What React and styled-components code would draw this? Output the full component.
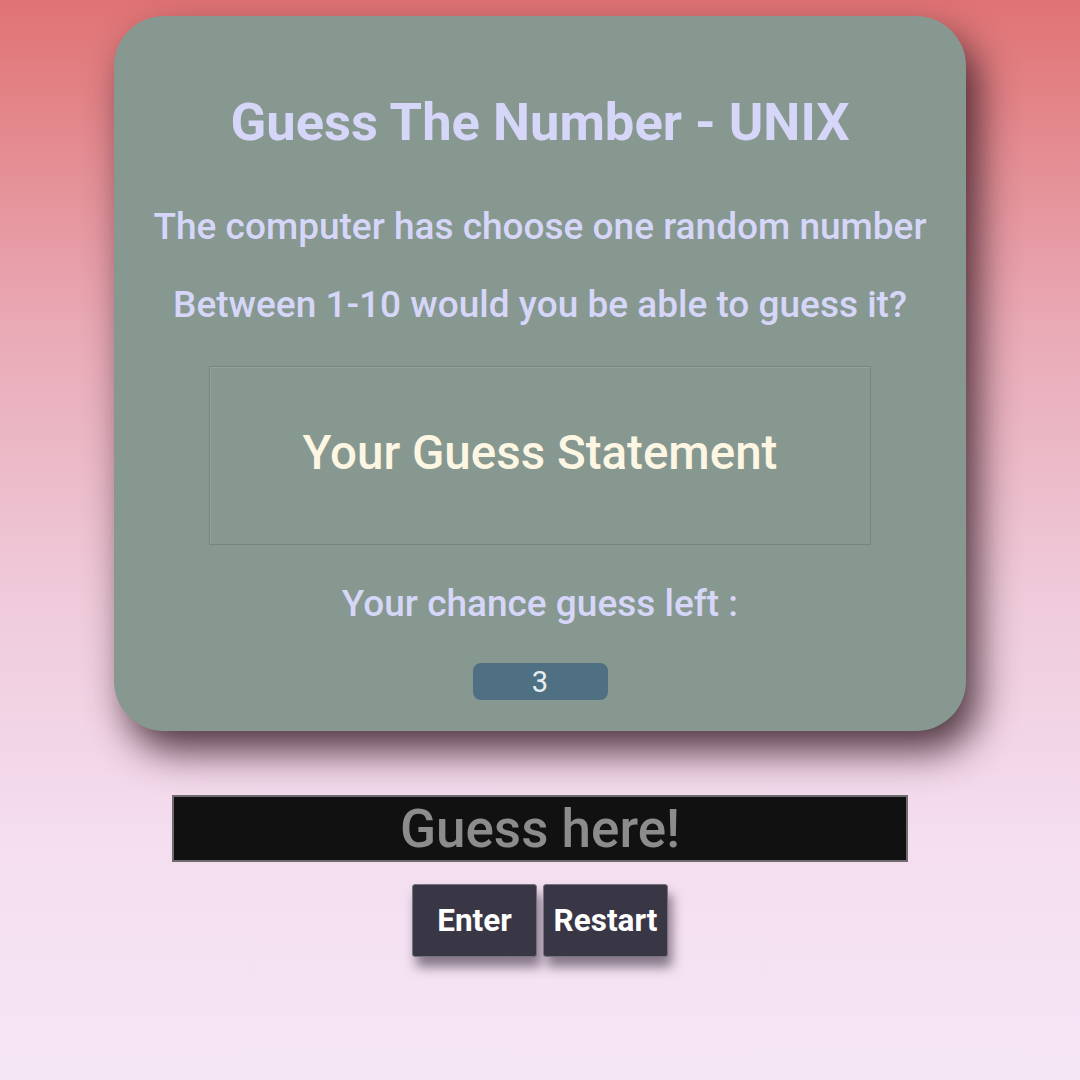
import React from "react";
import styled, { createGlobalStyle } from "styled-components";

const GlobalStyle = createGlobalStyle`
  html, body {
    margin: 0;
    padding: 0;
  }
  body {
    font-family: Roboto, "Liberation Sans", sans-serif;
    min-height: 1080px;
    background: linear-gradient(180deg, #e07373 0%, #e9a9b5 30%, #efcada 55%, #f4def0 78%, #f5e6f6 100%);
  }
`;

const Page = styled.main`
  display: flex;
  flex-direction: column;
  align-items: center;
  padding-top: 16px;
  height: 1080px;
  box-sizing: border-box;
`;

const Card = styled.section`
  width: 852px;
  height: 715px;
  box-sizing: border-box;
  background: #879891;
  border-radius: 50px;
  box-shadow: 12px 20px 38px rgba(50, 25, 35, 0.85);
  display: flex;
  flex-direction: column;
  align-items: center;
  padding-top: 76px;
`;

const Title = styled.h1`
  margin: 0;
  font-size: 52.5px;
  font-weight: 700;
  line-height: 60px;
  color: #d6d6f9;
`;

const Line = styled.p`
  margin: ${(p) => p.$top}px 0 0;
  font-size: 37px;
  font-weight: 500;
  line-height: 44px;
  color: #d6d6f9;
`;

const Statement = styled.div`
  margin-top: 39px;
  width: 662px;
  height: 179px;
  box-sizing: border-box;
  padding-bottom: 6px;
  border: 1px solid #76857f;
  box-shadow: inset 1px 1px 0 #93a39d;
  display: flex;
  align-items: center;
  justify-content: center;
  font-size: 47.5px;
  font-weight: 500;
  color: #fdf6e3;
`;

const Badge = styled.div`
  margin-top: 37px;
  width: 135px;
  height: 37px;
  border-radius: 8px;
  background: #4e7082;
  color: #e6eef2;
  font-size: 29px;
  display: flex;
  align-items: center;
  justify-content: center;
`;

const GuessInput = styled.input`
  margin-top: 64px;
  width: 736px;
  height: 67px;
  box-sizing: border-box;
  background: #111111;
  border: 2px solid #6e6a70;
  color: #f2f2f2;
  font-family: Roboto, "Liberation Sans", sans-serif;
  font-size: 53px;
  font-weight: 500;
  text-align: center;
  outline: none;
  padding: 0;

  &::placeholder {
    color: #8c8c8c;
  }
`;

const ButtonRow = styled.div`
  display: flex;
  gap: 6px;
  margin-top: 22px;
`;

const Button = styled.button`
  width: 125px;
  height: 73px;
  background: #393645;
  border: 1px solid #77737f;
  border-radius: 3px;
  color: #ffffff;
  font-family: Roboto, "Liberation Sans", sans-serif;
  font-size: 31.5px;
  font-weight: 700;
  padding: 0;
  box-shadow: 4px 10px 12px rgba(40, 30, 45, 0.55);
`;

export default function App() {
  return (
    <>
      <GlobalStyle />
      <Page>
        <Card>
          <Title>Guess The Number - UNIX</Title>
          <Line $top={53}>The computer has choose one random number</Line>
          <Line $top={34}>Between 1-10 would you be able to guess it?</Line>
          <Statement>Your Guess Statement</Statement>
          <Line $top={37}>Your chance guess left :</Line>
          <Badge>3</Badge>
        </Card>
        <GuessInput placeholder="Guess here!" />
        <ButtonRow>
          <Button>Enter</Button>
          <Button>Restart</Button>
        </ButtonRow>
      </Page>
    </>
  );
}
